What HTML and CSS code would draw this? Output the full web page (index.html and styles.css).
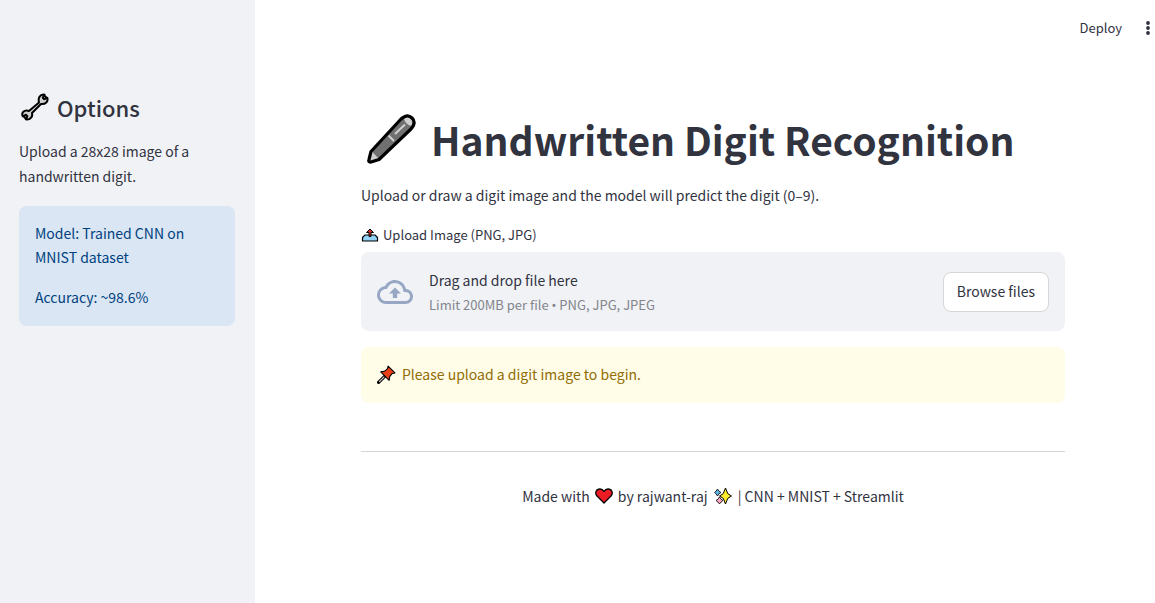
FILE: index.html
```html
<!DOCTYPE html>
<html lang="en">
<head>
<meta charset="utf-8">
<title>Handwritten Digit Recognition</title>
<link rel="stylesheet" href="styles.css">
</head>
<body>
<div class="app">
  <aside class="sidebar">
    <h2 class="sidebar-title">
      <svg class="icon-wrench" viewBox="0 0 28 28" aria-hidden="true"><path d="M18 9.500C16.800 5 19 1.500 22.500 1.500L23.500 1.800 21.800 4.800 23.300 6.200 26.300 4.800C27.500 8.500 24.500 11.500 20 11L11 20C12 23.500 9.500 26.700 5.500 26.500L4.800 26.200 6.300 23.300 4.800 21.800 1.800 23.200C0 20 3 16.500 8 18Z" fill="#d0d0cf" stroke="#000" stroke-width="2" stroke-linejoin="round"/><path d="M22.800 2L26 5.200M2 22.700L5.300 26" stroke="#000" stroke-width="2"/></svg>
      Options
    </h2>
    <p class="sidebar-text">Upload a 28x28 image of a handwritten digit.</p>
    <div class="info">
      <p>Model: Trained CNN on MNIST dataset</p>
      <p>Accuracy: ~98.6%</p>
    </div>
  </aside>
  <div class="page">
    <header class="toolbar">
      <button class="deploy" type="button">Deploy</button>
      <button class="menu" type="button" aria-label="Main menu">
        <svg class="icon-dots" viewBox="0 0 4 14" aria-hidden="true"><g fill="#31333f"><circle cx="2" cy="2" r="1.900"/><circle cx="2" cy="7" r="1.900"/><circle cx="2" cy="12" r="1.900"/></g></svg>
      </button>
    </header>
    <main class="content">
      <h1 class="title">
        <svg class="icon-pen" viewBox="0 0 50 50" aria-hidden="true"><path d="M2.500 48L4.500 37.500 35 5C39 1.500 43 1 46 4C49 7 48.500 11 45 15L13 46Z" fill="#707070"/><path d="M2.500 48L6 37.500 13 45Z" fill="#d0d0cf"/><path d="M38 5C41 1.500 44 2 46 4C48.500 7 48 10 46 12Q40 11 38 5Z" fill="#d0d0cf"/><path d="M22.500 21.500L28 27M29 20L39 10.500" fill="none" stroke="#d0d0cf" stroke-width="2"/><path d="M3 45.500L5 37.500 35 5C39 1.500 43 1 46 4C49 7 48.500 11 45 15L13 45.500 5 48Q2 48.500 3 45.500Z" fill="none" stroke="#000" stroke-width="3.200" stroke-linejoin="round"/></svg>
        Handwritten Digit Recognition
      </h1>
      <p class="intro">Upload or draw a digit image and the model will predict the digit (0–9).</p>
      <div class="upload-label" id="upload-label">
        <svg class="icon-outbox" viewBox="0 0 18 14" aria-hidden="true"><path d="M4 7H14L16.500 9.500V13H1.500V9.500Z" fill="#92d3f5" stroke="#000" stroke-width="1.200" stroke-linejoin="round"/><path d="M9 1L12.500 4.500H10V8.500H8V4.500H5.500Z" fill="#d22f27" stroke="#000" stroke-width="1" stroke-linejoin="round"/></svg>
        Upload Image (PNG, JPG)
      </div>
      <section class="dropzone" aria-labelledby="upload-label">
        <svg class="icon-cloud" viewBox="0 0 24 24" aria-hidden="true"><path fill="#97a6c3" d="M19.350 10.040A7.490 7.490 0 0 0 12 4C9.110 4 6.600 5.640 5.350 8.040A5.994 5.994 0 0 0 0 14c0 3.310 2.690 6 6 6h13c2.760 0 5-2.240 5-5 0-2.640-2.050-4.780-4.650-4.960zM19 18H6c-2.210 0-4-1.790-4-4 0-2.050 1.530-3.760 3.560-3.970l1.070-.11.5-.95A5.469 5.469 0 0 1 12 6c2.620 0 4.880 1.860 5.390 4.430l.3 1.500 1.530.11A2.980 2.980 0 0 1 22 15c0 1.650-1.350 3-3 3zM8 13h2.550v3h2.900v-3H16l-4-4z"/></svg>
        <div class="drop-text">
          <span>Drag and drop file here</span>
          <small>Limit 200MB per file <span class="bullet">•</span> PNG, JPG, JPEG</small>
        </div>
        <button class="browse" type="button">Browse files</button>
      </section>
      <div class="warning">
        <svg class="icon-pin" viewBox="0 0 18 18" aria-hidden="true"><path d="M7.500 10.500L1.500 16.500" stroke="#000" stroke-width="3" stroke-linecap="round"/><path d="M7 11L2 16" stroke="#d0d0cf" stroke-width="1.200"/><path d="M10.500 1L17 7.500 14.500 8 12 11 11.500 14.500 3.500 6.500 7 6 10 3.500Z" fill="#ea3f16" stroke="#000" stroke-width="1" stroke-linejoin="round"/></svg>
        <span>Please upload a digit image to begin.</span>
      </div>
      <hr class="divider">
      <footer class="credits">
        <span>Made with</span>
        <svg class="icon-heart" viewBox="0 0 18 16" aria-hidden="true"><path d="M9 15L2 8C-.5 5 1 1 5 1Q7.500 1 9 3.500Q10.500 1 13 1C17 1 18.500 5 16 8Z" fill="#ea1c24" stroke="#000" stroke-width="1.300" stroke-linejoin="round"/></svg>
        <span>by rajwant-raj</span>
        <svg class="icon-sparkles" viewBox="0 0 18 18" aria-hidden="true"><g stroke="#000" stroke-linejoin="round"><path d="M3.500 2L4.800 4 7 5.500 4.800 7 3.500 9 2.200 7 .5 5.500 2.200 4Z" fill="#61b2e4" stroke-width=".8"/><path d="M5.500 10L7 12.200 9 13.500 7 15 5.500 17 4 15 2 13.500 4 12.200Z" fill="#ffa7c0" stroke-width=".8"/><path d="M11.500 1L13.800 6.700 17.500 9 13.800 11.300 11.500 17 9.200 11.300 5.500 9 9.200 6.700Z" fill="#fcea2b" stroke-width="1"/></g></svg>
        <span>| CNN + MNIST + Streamlit</span>
      </footer>
    </main>
  </div>
</div>
</body>
</html>
```
FILE: styles.css
```css
* { box-sizing: border-box; }
body {
  margin: 0;
  background: #fff;
  color: #31333f;
  font-family: "Noto Sans CJK SC", "Noto Sans", sans-serif;
  font-size: 14px;
  line-height: 24px;
}
h1, h2, p { margin: 0; }
svg { flex: none; display: block; }
button { font: inherit; color: inherit; cursor: pointer; }
.app { display: flex; min-height: 100vh; }
.sidebar {
  flex: none;
  width: 255px;
  padding: 91px 20px 24px 19px;
  background: #f0f2f6;
}
.sidebar-title {
  display: flex;
  align-items: center;
  gap: 8px;
  padding-left: 2px;
  font-size: 22px;
  font-weight: 500;
  line-height: 32px;
}
.sidebar-text { margin: 16px 0 17px; line-height: 25px; }
.info {
  display: grid;
  gap: 16px;
  padding: 15px 16px 17px;
  border-radius: 8px;
  background: #dae6f4;
  color: #004280;
}
.page { flex: 1; min-width: 0; }
.toolbar {
  display: flex;
  justify-content: flex-end;
  align-items: center;
  gap: 22px;
  height: 55px;
  padding-right: 3px;
}
.deploy, .menu { padding: 0; border: 0; background: none; }
.deploy { font-size: 13px; }
.menu { display: flex; padding: 4px 2px; }
.content { padding: 56px 90px 48px 106px; }
.title {
  display: flex;
  align-items: center;
  gap: 15px;
  padding-left: 5px;
  font-size: 39px;
  font-weight: 700;
  line-height: 56px;
}
.intro { margin: 16px 0; }
.upload-label {
  display: flex;
  align-items: center;
  gap: 4px;
  margin-bottom: 5px;
  font-size: 13px;
}
.dropzone {
  display: flex;
  align-items: center;
  gap: 16px;
  padding: 16px;
  border-radius: 8px;
  background: #f0f2f6;
}
.drop-text { display: grid; flex: 1; gap: 2px; }
.drop-text small { font-size: 13px; line-height: 21px; color: #83858c; }
.bullet { font-family: "Noto Sans", sans-serif; line-height: 1; }
.browse {
  height: 40px;
  padding: 0 13px 2px;
  border: 1px solid #d6d6d9;
  border-radius: 8px;
  background: #fff;
}
.warning {
  display: flex;
  align-items: center;
  gap: 6px;
  margin-top: 16px;
  padding: 15px 16px 17px;
  border-radius: 8px;
  background: #fffce7;
  color: #926c05;
}
.divider { margin: 48px 0 32px; border: 0; border-top: 1px solid #d6d6d9; }
.credits { display: flex; justify-content: center; align-items: center; gap: 5px; }
.icon-wrench { width: 28px; height: 28px; }
.icon-dots { width: 4px; height: 14px; }
.icon-pen { width: 50px; height: 50px; }
.icon-outbox { width: 18px; height: 14px; }
.icon-cloud { width: 36px; height: 36px; }
.icon-pin { width: 19px; height: 19px; }
.icon-heart { width: 18px; height: 16px; }
.icon-sparkles { width: 20px; height: 18px; }
```
